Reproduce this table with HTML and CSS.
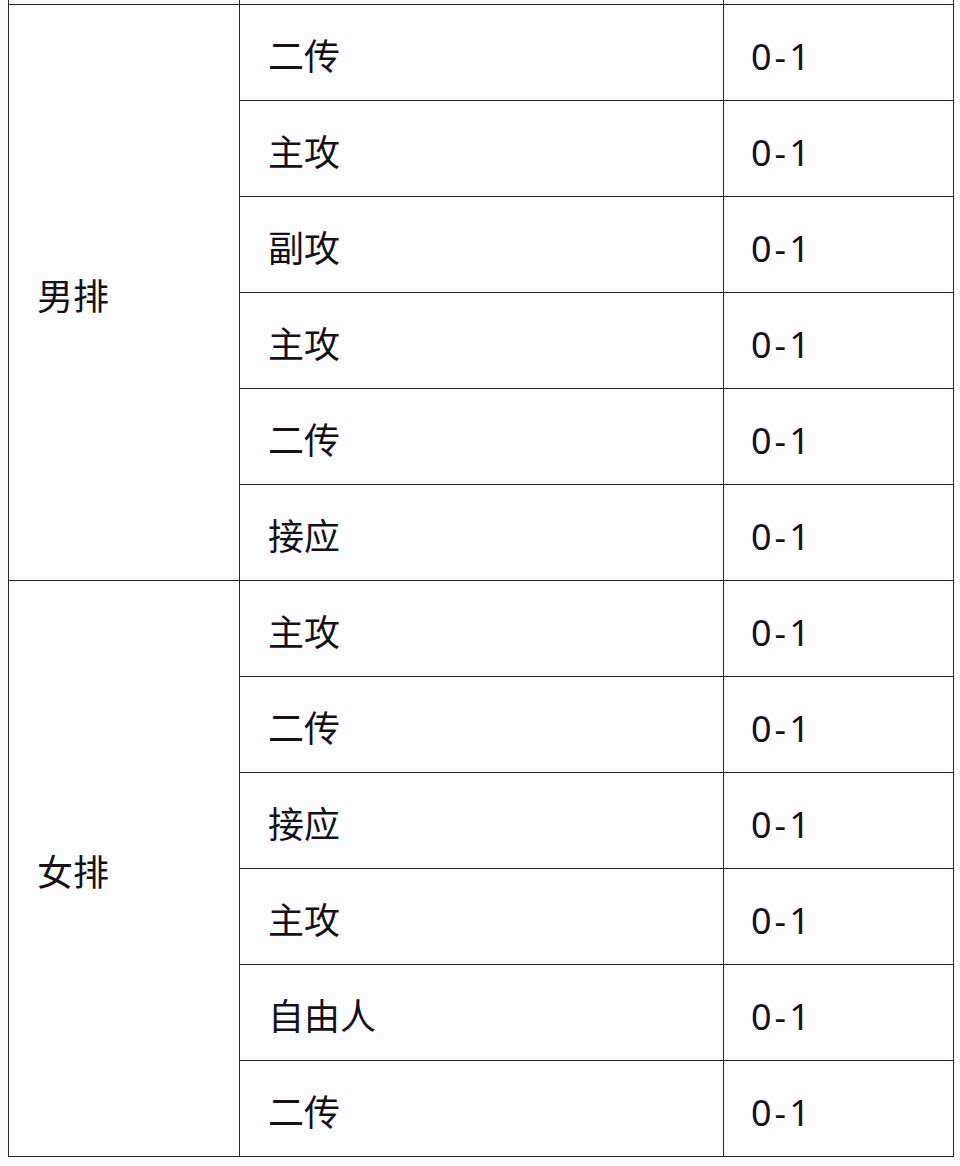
FILE: index.html
```html
<!DOCTYPE html>
<html lang="zh">
<head>
<meta charset="utf-8">
<link rel="stylesheet" href="styles.css">
</head>
<body>
<table class="grid">
  <colgroup>
    <col class="c-team">
    <col class="c-pos">
    <col class="c-score">
  </colgroup>
  <tbody>
    <tr class="stub"><td></td><td></td><td></td></tr>
    <tr><td class="team" rowspan="6">男排</td><td>二传</td><td class="score">0-1</td></tr>
    <tr><td>主攻</td><td class="score">0-1</td></tr>
    <tr><td>副攻</td><td class="score">0-1</td></tr>
    <tr><td>主攻</td><td class="score">0-1</td></tr>
    <tr><td>二传</td><td class="score">0-1</td></tr>
    <tr><td>接应</td><td class="score">0-1</td></tr>
    <tr><td class="team" rowspan="6">女排</td><td>主攻</td><td class="score">0-1</td></tr>
    <tr><td>二传</td><td class="score">0-1</td></tr>
    <tr><td>接应</td><td class="score">0-1</td></tr>
    <tr><td>主攻</td><td class="score">0-1</td></tr>
    <tr><td>自由人</td><td class="score">0-1</td></tr>
    <tr><td>二传</td><td class="score">0-1</td></tr>
  </tbody>
</table>
</body>
</html>
```
FILE: styles.css
```css
html, body {
  margin: 0;
  padding: 0;
  background: #fcfcfe;
}
body {
  font-family: "Noto Sans", "Noto Sans CJK SC", sans-serif;
  color: #141218;
}
.grid {
  margin-left: 8px;
  border-collapse: collapse;
  table-layout: fixed;
  width: 945px;
  background: #fdfdff;
}
.c-team { width: 231px; }
.c-pos { width: 484px; }
.c-score { width: 230px; }
.grid td {
  border: 1px solid #2a1f38;
  height: 96px;
  padding: 10px 0 0 28px;
  font-size: 36px;
  line-height: 40px;
  vertical-align: middle;
  box-sizing: border-box;
}
.grid td.score {
  letter-spacing: 3px;
  padding-left: 27px;
}
.grid tr.stub td {
  border-top: 0;
  height: 4px;
  padding: 0;
  line-height: 0;
  font-size: 0;
}
.grid td.team {
  padding-left: 28px;
}
```
